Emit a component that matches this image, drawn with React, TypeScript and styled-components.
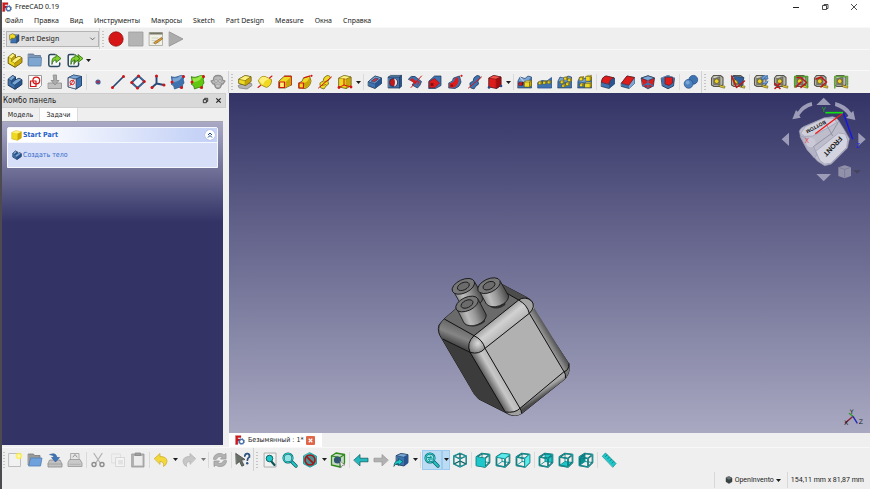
import React from "react";
import styled, { createGlobalStyle, css } from "styled-components";

const UI = `"Noto Sans", "Open Sans", sans-serif`;
const STATUS = `Roboto, "Noto Sans", sans-serif`;
const PANEL = `"DejaVu Sans Condensed", "DejaVu Sans", "Noto Sans", sans-serif`;

const GlobalStyle = createGlobalStyle`
  *, *::before, *::after { box-sizing: border-box; }
  body { margin: 0; background: #efefef; color: #1b1b1b; font: 7px/12px ${UI}; }
  button, select { font: inherit; color: inherit; margin: 0; padding: 0; border: 0; background: none; }
  svg { display: block; flex: none; }
`;

/* ---------- drawing helpers ---------- */

type Palette = [light: string, mid: string, dark: string, line: string];
const YEL: Palette = ["#fdf07a", "#efd922", "#c8a60a", "#61540c"];
const BLU: Palette = ["#7aa6d6", "#3f73b0", "#28548f", "#1a3252"];
const RED: Palette = ["#f4544c", "#dd1c1c", "#a80c0c", "#4a1216"];
const TEA: Palette = ["#5fe9ea", "#1fc6ca", "#0a9092", "#0b5557"];

type PathProps = { d: string; f?: string; s?: string; w?: number };
const P = ({ d, f = "none", s = "none", w = 0.8 }: PathProps) => (
  <path d={d} fill={f} stroke={s} strokeWidth={w} strokeLinejoin="round" strokeLinecap="round" />
);
const Dot = ({ x, y, r = 1.5, f = "#d41414" }: { x: number; y: number; r?: number; f?: string }) => (
  <circle cx={x} cy={y} r={r} fill={f} />
);

type BoxProps = { c: Palette; x?: number; y?: number; w?: number; h?: number; d?: number; face?: string; line?: number };
const Box = ({ c, x = 1.5, y = 4.5, w = 9, h = 9.5, d = 3.5, face, line = 0.7 }: BoxProps) => (
  <>
    <P d={`M${x} ${y}l${d} ${-d * 0.8}h${w}l${-d} ${d * 0.8}z`} f={c[0]} s={c[3]} w={line} />
    <P d={`M${x + w} ${y}l${d} ${-d * 0.8}v${h}l${-d} ${d * 0.8}z`} f={c[2]} s={c[3]} w={line} />
    <P d={`M${x} ${y}h${w}v${h}h${-w}z`} f={face ?? c[1]} s={c[3]} w={line} />
  </>
);

const Body = ({ c }: { c: Palette }) => (
  <>
    <P d="M1.500 5L5.500 1.500 8.500 3V6L12 4.200 14.800 5.800V10.500L8 15.200 1.500 11.500z" f={c[1]} s={c[3]} w={1} />
    <P d="M1.500 5L5.500 1.500 8.500 3 4.800 6.500z" f={c[0]} s={c[3]} w={0.4} />
    <P d="M4.800 6.500L8.500 3V6L4.800 9z" f={c[2]} s={c[3]} w={0.4} />
    <P d="M4.800 9L8.500 6 12 4.200 14.800 5.800 8 11z" f={c[0]} s={c[3]} w={0.4} />
    <P d="M8 11L14.800 5.800V10.500L8 15.200z" f={c[2]} s={c[3]} w={0.4} />
  </>
);

type View = "iso" | "front" | "top" | "right" | "rear" | "bottom" | "left";
const VIEW_FACE: Record<string, string> = {
  front: "M1.500 5l8.500 1.500v8.500L1.500 13.500z",
  top: "M1.500 5L7 1.500l7.500 1L10 6.500z",
  right: "M10 6.500l4.500-4V10.500L10 15z",
  rear: "M7 1.500l7.500 1v8L7 9.500z",
  bottom: "M1.500 13.500L7 9.500l7.500 1L10 15z",
  left: "M1.500 5L7 1.500v8l-5.500 4z",
};
const Frame = ({ face }: { face: View }) => {
  if (face === "iso")
    return (
      <>
        <P d="M8 1.300l6.200 2.700v8L8 14.800 1.800 12V4zM1.800 4L8 6.800 14.200 4M8 6.800v8M1.800 12L8 9l6.200 3M8 1.300v5" s={TEA[3]} w={1.3} />
        <P d="M8 1.300l6.200 2.700v8L8 14.800 1.800 12V4zM1.800 4L8 6.800 14.200 4M8 6.800v8" s={TEA[1]} w={0.6} />
      </>
    );
  const outline = "M1.500 5L7 1.500l7.500 1v8L10 15l-8.500-1.500zM1.500 5l8.500 1.500 4.500-4M10 6.500V15";
  const hidden = face === "rear" || face === "bottom" || face === "left";
  return (
    <>
      {hidden && <P d={VIEW_FACE[face]} f={face === "left" ? TEA[2] : TEA[1]} />}
      <P d="M7 1.500v8l7.500 1M7 9.500l-5.500 4" s={TEA[2]} w={0.9} />
      <P d={outline} s={TEA[3]} w={1.6} />
      {!hidden && <P d={VIEW_FACE[face]} f={face === "front" ? TEA[1] : TEA[0]} />}
      <P d={outline} s={TEA[1]} w={0.6} />
    </>
  );
};

const Tape = () => (
  <>
    <P d="M1.500 4l2-2.500h7l2.500 2v7l-2 2H4L1.500 11z" f="#b9b9ac" s="#55554d" w={1.1} />
    <P d="M3.500 4L10 2.800v8H4z" f="#7d7d74" s="#5c5c55" w={0.6} />
    <circle cx="6.700" cy="7.200" r="2.300" fill="#ecd02a" stroke="#554c0c" strokeWidth=".6" />
    <P d="M4 3.500l3-.700" s="#e8e8e0" w={0.9} />
    <P d="M9 11l6 1.200-.500 2L10 13z" f="#e3c93a" s="#655a10" w={0.6} />
  </>
);

const Lens = () => (
  <>
    <P d="M9 9l5 5" s={TEA[3]} w={3.2} />
    <P d="M9 9l5 5" s={TEA[1]} w={1.9} />
    <circle cx="6" cy="6" r="4.500" fill="#93e3e4" stroke={TEA[3]} strokeWidth="2" />
    <circle cx="6" cy="6" r="4.500" fill="none" stroke={TEA[1]} strokeWidth="1.200" />
  </>
);

const Terrain = () => (
  <>
    <P d="M1 7l2-4 5 1.500 3-2.500 3.500 1V14H1z" f={BLU[1]} s={BLU[3]} w={0.6} />
    <P d="M1.500 7l2-3.500 4.500 1.500 3-2.500 3 1-3 3.500-5 1z" f={BLU[0]} />
  </>
);

const ExportArrow = ({ x = 0 }: { x?: number }) => (
  <g transform={`translate(${x} 0)`}>
    <P d="M5 12c-.500-5 1-7 4-7V2.500L14 6.500l-5 4V8C7 8 5.800 9 5 12z" f="#7fd02f" s="#2c6612" w={0.8} />
  </g>
);

const ICONS: Record<string, React.ReactNode> = {
  app: (
    <>
      <P d="M1 1h8.500v3H4.500v2.500H8v3H4.500V15H1z" f="#d8151b" s="#7c0a0e" w={0.5} />
      <circle cx="10.500" cy="10.500" r="3.400" fill="none" stroke="#4a72ad" strokeWidth="2" />
      <circle cx="10.500" cy="10.500" r="4.800" fill="none" stroke="#35598e" strokeWidth="1.200" strokeDasharray="1.900 1.870" />
    </>
  ),
  workbench: (
    <>
      <Box c={BLU} x={3} y={5.5} w={8} h={9} />
      <P d="M1 3l4.500-2L10 4 8 8 4 7.500 1.500 10z" f={YEL[1]} s={YEL[3]} />
    </>
  ),
  record: <circle cx="8" cy="8" r="7.200" fill="#d61616" stroke="#8b0a0a" strokeWidth=".7" />,
  stop: <P d="M1 1h14v14H1z" f="#b4b4b4" s="#9c9c9c" />,
  play: <P d="M1.500 1l13.500 7L1.500 15z" f="#acacac" s="#8e8e8e" />,
  macro: (
    <>
      <P d="M1.500 1.500h13v13h-13z" f="#f1f1e6" s="#a6a69b" />
      <P d="M1.500 1.500h13v2h-13z" f="#777768" />
      <P d="M4 7h6M4 9.500h4M4 12h7" s="#bcbcb0" w={0.6} />
      <P d="M6 11.500l7.500-5 1 1.500-7 4.800z" f="#e8a02a" s="#6b4a12" w={0.6} />
    </>
  ),
  newPart: <Body c={YEL} />,
  body: <Body c={BLU} />,
  group: (
    <>
      <P d="M1.500 2h5l1 1.500h6V13h-12z" f="#7e97b4" s="#5a728f" />
      <P d="M2 5.500h12.500L14 14H1.800z" f="#7fa6d0" s="#5a80aa" />
    </>
  ),
  link: (
    <>
      <P d="M8 2.500H3.500Q1.800 2.500 1.800 4.200v8.600q0 1.700 1.700 1.700h7.500q1.700 0 1.700-1.700V11" f="#f4f7fa" s="#2b475e" w={1.5} />
      <ExportArrow />
    </>
  ),
  linkGroup: (
    <>
      <P d="M7 2.500H3Q1.200 2.500 1.200 4.200v8.600q0 1.700 1.700 1.700h7q1.700 0 1.700-1.700V11" f="#f4f7fa" s="#2b475e" w={1.5} />
      <ExportArrow x={2} />
      <ExportArrow x={-1} />
    </>
  ),
  sketch: (
    <>
      <P d="M2 1.500h12.500v10l-3 3H2z" f="#fdfdfd" s="#858585" />
      <P d="M3.500 7h5.500v5.500H3.500z" s="#d41414" w={1.2} />
      <circle cx="9.300" cy="6.500" r="3.400" fill="none" stroke="#d41414" strokeWidth="1.200" />
    </>
  ),
  importTray: (
    <>
      <P d="M1.500 9h13v5.500h-13z" f="#c0c0c0" s="#8a8a8a" />
      <P d="M6.500 1h3v5.500H12l-4 4.500-4-4.500h2.500z" f="#ababab" s="#8a8a8a" />
    </>
  ),
  mapSketch: (
    <>
      <P d="M1.500 3.500L6.500 1l8 1.500v9L9 15l-7.500-2z" f={BLU[1]} s={BLU[3]} w={0.8} />
      <P d="M1.500 3.500L6.500 1l8 1.500L9 5z" f={BLU[0]} s={BLU[3]} w={0.4} />
      <P d="M9 5l5.500-2.500v9L9 15z" f={BLU[1]} s={BLU[3]} w={0.5} />
      <P d="M1.500 3.500L9 5v10l-7.500-2z" f="#e9e9ef" s={BLU[3]} w={0.5} />
      <circle cx="5.200" cy="8.500" r="2.200" fill="none" stroke="#d41414" strokeWidth=".9" />
      <P d="M3 11.500l4-6" s="#d41414" />
    </>
  ),
  point: <circle cx="8" cy="8" r="2" fill="#c8203a" stroke="#3465a4" strokeWidth="1.200" />,
  line: (
    <>
      <P d="M2.500 13.500L13.500 2.500" s="#274a78" w={1.7} />
      <Dot x={2.5} y={13.5} /><Dot x={13.5} y={2.5} />
    </>
  ),
  plane: (
    <>
      <P d="M8.500 2l6 5.500-7 6.500-6-5.500z" f="#eef3f9" s="#274a78" w={1.9} />
      <P d="M8.500 2l6 5.500-7 6.500-6-5.500z" s="#5d8dc4" w={0.6} />
      <Dot x={8.5} y={2} /><Dot x={14.2} y={7.5} /><Dot x={7.5} y={14} /><Dot x={1.8} y={8.5} />
    </>
  ),
  lcs: (
    <>
      <P d="M6.500 2v7.500L2 13.500M6.500 9.500l7.500 1.500" s="#274a78" w={1.9} />
      <Dot x={6.5} y={2} /><Dot x={2} y={13.5} /><Dot x={14} y={11} />
    </>
  ),
  binder: (
    <>
      <P d="M1.500 3q4 1 6.500-.500T14 2q-1.500 4 0 7-2 1-1.500 5-4-1.500-8 1Q4.500 11 1.500 10.500q1-4 0-7.500z" f={BLU[1]} s={BLU[2]} />
      <P d="M2.500 4q4 .800 6-1t4-1Q11 7 3 8.500z" f={BLU[0]} />
      <Dot x={13.5} y={2.5} /><Dot x={2} y={8} /><Dot x={11.5} y={13.5} />
    </>
  ),
  subBinder: (
    <>
      <P d="M1.500 3q4 1 6.500-.500T14 2q-1.500 4 0 7-2 1-1.500 5-4-1.500-8 1Q4.500 11 1.500 10.500q1-4 0-7.500z" f="#62c80f" s="#2f7a05" />
      <P d="M2.500 4q4 .800 6-1t4-1Q11 7 3 8.500z" f="#98e845" />
      <Dot x={13.5} y={2.5} /><Dot x={2} y={8} /><Dot x={11.5} y={13.5} />
    </>
  ),
  clone: (
    <>
      <P d="M3.500 6Q3 1.500 8 1.500T12.500 6l2.500 1-2 3h-1.500Q11 14.500 8 14.500T4.500 10H3L1 7z" f="#b9b9b9" s="#8d8d8d" w={1.3} />
      <circle cx="6" cy="7" r="1.300" fill="#eee" stroke="#777" strokeWidth=".6" />
      <circle cx="10" cy="7" r="1.300" fill="#eee" stroke="#777" strokeWidth=".6" />
      <P d="M6 11h4v2H6z" f="#dcdcdc" s="#888" w={0.5} />
    </>
  ),
  pad: (
    <>
      <P d="M1.500 11.500L6 9.500h8.500l.500 2-5 3.500-7.500-1z" f="#b5b5b5" s="#808080" />
      <P d="M2 5L8 1.500l6 1.200V7.500L8.500 11.500 2 9.500z" f={YEL[1]} s={YEL[3]} />
      <P d="M2 5L8 1.500l6 1.200L8.500 6.500z" f={YEL[0]} s={YEL[3]} w={0.5} />
      <P d="M8.500 6.500L14 2.700V7.500l-5.500 4z" f={YEL[2]} s={YEL[3]} w={0.4} />
    </>
  ),
  revolution: (
    <>
      <P d="M1.500 6.500Q4 1.500 8 2.500L14.500 5.500q.500 6-5 8L4 11z" f={YEL[1]} s="#9a8412" />
      <P d="M2 6.500Q4.500 2 8 3l4.500 2Q7 6 6 11z" f={YEL[0]} />
      <P d="M1 13.500l2.500-2M12.500 4L15 2" s="#d41414" w={1.1} />
    </>
  ),
  loft: (
    <>
      <P d="M2 7l5.500-5h6.700V11l-6 3H2z" f={YEL[1]} s={YEL[3]} />
      <P d="M7.500 2.200h6.700V11" s="#d41414" w={1.1} />
      <P d="M8.500 8L14 3v7.500l-5.500 3z" f={YEL[2]} />
      <P d="M2.500 8H7.500V13.500H2.500z" f={YEL[0]} s="#d41414" w={1.2} />
    </>
  ),
  pipe: (
    <>
      <P d="M2 9Q6 8 6.500 4l6-2 1.500 5q-1 6-6 7.500L2 14z" f={YEL[1]} s={YEL[3]} />
      <P d="M6.500 9q5-1 6-6.500l1.300 5q-1 5-6 6.500z" f={YEL[2]} />
      <P d="M2 9h4.500v5H2zM7 3.800L13 2" s="#d41414" w={1.2} />
      <Dot x={14.5} y={1.8} r={1.1} />
    </>
  ),
  helix: (
    <>
      <P d="M3 11q-1-3 3-3.500Q6 3 10 1.500q4 0 3 3-2 1-2 3 2 3-2 4.500l-2 3-3-1z" f={YEL[1]} s={YEL[3]} w={0.7} />
      <P d="M7 8l4-1.500M5 11.500l4-1" s={YEL[3]} w={0.6} />
      <P d="M1.500 14L14.500 3" s="#d41414" w={1} />
    </>
  ),
  addPrim: (
    <>
      <P d="M2 4L7 1.500l7 1.500v8.500L9 14.500 2 13z" f={YEL[1]} s={YEL[3]} />
      <P d="M2 4L7 1.500 14 3 9.500 5z" f={YEL[0]} s={YEL[3]} w={0.4} />
      <P d="M9.500 5L14 3v8.500l-4.500 3z" f={YEL[2]} s={YEL[3]} w={0.4} />
      <P d="M2 13.500l5-2.500 7 2M7 11V5" s="#d41414" w={1} />
      <Dot x={2} y={13.5} r={1.4} /><Dot x={14} y={13} r={1.4} />
    </>
  ),
  pocket: (
    <>
      <P d="M1.500 7.500L8 2l6.500 2V9.500L8 14.500l-6.500-2.500z" f={BLU[1]} s={BLU[3]} />
      <P d="M1.500 7.500L8 2l6.500 2L8 9.500z" f={BLU[0]} s={BLU[3]} w={0.5} />
      <P d="M4.500 7L8.500 4l3 .900-4 3z" f="#c63a48" s={BLU[3]} w={0.6} />
      <P d="M8 9.500L14.500 4v5.500l-6.500 5z" f={BLU[2]} />
    </>
  ),
  hole: (
    <>
      <Box c={BLU} x={1.5} y={3} w={11} h={11} d={2} />
      <circle cx="6.500" cy="8.500" r="4" fill="#c41818" stroke={BLU[3]} strokeWidth=".8" />
      <P d="M7 4.600a4 4 0 010 7.800q2-4 0-7.800z" f="#e3e8ee" />
    </>
  ),
  groove: (
    <>
      <P d="M1.500 5Q4 1 8 2.500l6.500 5q-1 4-4 6.500L5 11l2-2.500z" f={BLU[1]} s={BLU[3]} w={0.7} />
      <P d="M5 4l5 4-2 2-5-4zM10.500 6l2 2-2 4" f={RED[1]} />
      <P d="M4 13.500L14.500 2" s="#d41414" w={1} />
    </>
  ),
  subLoft: (
    <>
      <P d="M2 7l5.500-5h6.500V11.500l-5.500 3H2z" f={BLU[1]} s={BLU[3]} w={0.7} />
      <P d="M2.500 7.500L7.500 4.500 12.500 9l-4.500 4.500H2.500z" f={RED[1]} s="#8b0505" w={0.5} />
      <P d="M3.500 9h3v3h-3z" f="#8a1010" />
    </>
  ),
  subPipe: (
    <>
      <P d="M2 9Q6 8 6.500 4l6-2 1.500 6q-1 5-6 6.500L2 14z" f={BLU[1]} s={BLU[3]} w={0.7} />
      <P d="M2.500 9.500q5-1 6-5.500l2.500-.500q2 6.500-4 10H2.500z" f={RED[1]} />
      <P d="M3.500 10.500h2.500v2h-2.500z" f="#8a1010" />
      <Dot x={14.5} y={1.8} r={1.1} />
    </>
  ),
  subHelix: (
    <>
      <P d="M3 11q-1-3 3-3.500Q6 3 10 1.500q4 0 3 3-2 1-2 3 2 3-2 4.500l-2 3-3-1z" f={BLU[1]} s={BLU[3]} w={0.7} />
      <P d="M1.500 14L14.500 3" s="#d41414" w={1} />
    </>
  ),
  subPrim: (
    <>
      <P d="M2 4L6.500 1.500 14 3v8.500L9.500 14.500 2 13z" f={RED[1]} s={RED[3]} />
      <P d="M2 4L6.500 1.500 14 3 9.500 5z" f={RED[0]} s={RED[3]} w={0.4} />
      <P d="M9.500 5L14 3v8.500l-4.500 3z" f={RED[2]} s={RED[3]} w={0.4} />
      <Dot x={2} y={13.5} r={1.3} f="#204a87" /><Dot x={14} y={12} r={1.3} f="#204a87" />
    </>
  ),
  mirrored: (
    <>
      <Terrain />
      <P d="M2.500 2.500l6 7" s="#e8eef6" w={0.8} />
      <Box c={YEL} x={7.5} y={8} w={5} h={5} d={2} line={0.5} />
      <Box c={RED} x={2} y={9} w={3} h={2.5} d={1.2} line={0.4} />
    </>
  ),
  linear: (
    <>
      <P d="M1 8.500l4-2 5 .500 4.500-3.500V14H1z" f={BLU[1]} s={BLU[2]} />
      <Box c={YEL} x={1.5} y={8} w={2.4} h={2.4} d={1} line={0.4} />
      <Box c={YEL} x={6} y={7.6} w={2.4} h={2.4} d={1} line={0.4} />
      <Box c={YEL} x={10.5} y={7.2} w={2.4} h={2.4} d={1} line={0.4} />
    </>
  ),
  polar: (
    <>
      <Terrain />
      <Box c={YEL} x={7} y={3.5} w={2.6} h={2.5} d={1} line={0.4} />
      <Box c={YEL} x={11} y={5} w={2.6} h={2.5} d={1} line={0.4} />
      <Box c={YEL} x={3.5} y={7} w={2.6} h={2.5} d={1} line={0.4} />
      <Box c={YEL} x={9} y={9} w={2.6} h={2.5} d={1} line={0.4} />
      <Box c={YEL} x={5} y={11} w={2.6} h={2} d={1} line={0.4} />
    </>
  ),
  multi: (
    <>
      <Terrain />
      <Box c={YEL} x={2.5} y={3.5} w={3} h={3} d={1.2} line={0.4} />
      <Box c={YEL} x={9} y={2.5} w={4} h={4.5} d={1.4} line={0.4} />
      <Box c={YEL} x={3} y={10} w={2.5} h={2.5} d={1.2} line={0.4} />
      <Box c={YEL} x={8} y={9.5} w={5} h={4} d={1.5} line={0.4} />
    </>
  ),
  fillet: (
    <>
      <P d="M1.500 7Q2 3 6 2l8.500 2V10L9 14.500l-7.500-2z" f={BLU[1]} s={BLU[3]} w={0.7} />
      <P d="M9 14.500V10Q9.500 5.500 14.500 4v6z" f={BLU[2]} />
      <P d="M1.500 8Q2 3 6 2l8 1.800Q9.500 5 9 10z" f={RED[1]} s="#6b1010" w={0.6} />
    </>
  ),
  chamfer: (
    <>
      <P d="M1.500 9L7 2l7.500 1.500V9.500L9 14.500l-7.500-2z" f={BLU[1]} s={BLU[3]} w={0.7} />
      <P d="M9 14.500V11l5.500-7.500v6z" f={BLU[0]} />
      <P d="M1.500 9L7 2l7.500 1.500L9 11z" f={RED[1]} s="#6b1010" w={0.6} />
    </>
  ),
  draft: (
    <>
      <P d="M1.500 4L8 1.800 14.500 4l-1.200 8L8 14.800l-5.300-3z" f={RED[1]} s={BLU[3]} />
      <P d="M1.500 4L8 1.800 14.500 4 8 6.500z" f={BLU[0]} s={BLU[3]} w={0.6} />
      <P d="M8 6.500v8M2.800 12L8 9l5.200 3" s={BLU[1]} w={1.4} />
    </>
  ),
  thickness: (
    <>
      <P d="M1.500 4L8 1.500 14.500 4l-1 8L8 14.800 2.500 12z" f={BLU[1]} s={BLU[3]} />
      <P d="M1.500 4L8 1.500 14.500 4" s={BLU[0]} />
      <P d="M5 3.500v6.500l4 1.500L12.500 9V3.800z" f={RED[1]} s="#6b1010" w={0.6} />
    </>
  ),
  boolean: (
    <>
      <circle cx="10.300" cy="5.800" r="4.400" fill={BLU[1]} stroke={BLU[2]} strokeWidth=".8" />
      <circle cx="5.600" cy="9.800" r="4.400" fill="#4f83c0" stroke={BLU[2]} strokeWidth=".8" />
      <circle cx="4.600" cy="8.500" r="2" fill={BLU[0]} />
    </>
  ),
  measure: <Tape />,
  measureAngle: (
    <>
      <Tape />
      <P d="M3 2l11 1.500-2.500 9z" f="#2f5f9f" s={BLU[3]} w={0.6} />
      <P d="M1.500 2l5 11.500L14.500 7" s="#c01818" w={1.5} />
    </>
  ),
  measureRefresh: (
    <>
      <Tape />
      <P d="M8.500 5q0-3.500 3-3.500L14 2.500V1l1 4h-4l1.500-1.200q-2-.500-2 1.700zM15 7q0 3-3 3L9 9" f="#729fcf" s="#3a6aa4" w={0.8} />
    </>
  ),
  measureClear: (<><Tape /><P d="M2 9.500l5 5M7 9.500l-5 5" s="#c01818" w={1.6} /></>),
  measureToggleAll: (
    <>
      <Tape />
      <P d="M1.800 13V2.500h12.700V13" s="#4da02a" w={1.7} />
      <P d="M4 3.500h4l5.500 5L8 13.500M3 13l5-5" s="#c01818" w={1.6} />
    </>
  ),
  measureToggle3d: (<><Tape /><P d="M3 5l5-2 5.500 5L8 13" s="#c01818" w={1.6} /></>),
  measureToggleDelta: (<><Tape /><P d="M1.800 14V2.500h12.700V11" s="#63a83a" w={1.5} /></>),
  fileNew: (
    <>
      <P d="M2 1.500h11.500v13H2z" f="#f1f1f1" s="#b0b0b0" />
      <circle cx="12" cy="4" r="3.300" fill="#ffee3c" opacity=".75" />
      <circle cx="12" cy="4" r="1.800" fill="#fff8a8" />
    </>
  ),
  fileOpen: (
    <>
      <P d="M1.500 2h5l1 1.500H13V13H1.500z" f="#9a9a9a" s="#777" />
      <P d="M4 6h11L13.500 14H2z" f="#6fa2dc" s="#4f7fb8" />
    </>
  ),
  fileSave: (
    <>
      <P d="M3 8h10l2 4v3H1v-3z" f="#c2c2c2" s="#8c8c8c" />
      <P d="M1 12h14" s="#9a9a9a" />
      <P d="M3 2.500Q9 0 10 5.500h2.500L8.500 10 4.500 5.500H7Q6.500 3 3 2.500z" f="#3c76b8" s="#2d5a92" w={0.6} />
    </>
  ),
  print: (
    <>
      <P d="M4 1.500h8v7H4z" f="#e6e6e6" s="#9a9a9a" />
      <P d="M6 5l2-2.500L10 5" s="#888" w={0.9} />
      <P d="M3 7.500h10l2 3.500v3.500H1V11z" f="#c9c9c9" s="#959595" />
      <P d="M3 12.300h10" s="#a4a4a4" w={0.7} />
    </>
  ),
  cut: (
    <>
      <P d="M4 1.500l6.500 10M12 1.500l-6.500 10" s="#b2b2b2" w={1.3} />
      <circle cx="4" cy="12.500" r="2" fill="none" stroke="#8d8d8d" strokeWidth="1.400" />
      <circle cx="12" cy="12.500" r="2" fill="none" stroke="#8d8d8d" strokeWidth="1.400" />
    </>
  ),
  copy: (
    <>
      <P d="M2 2h8.500v9H2z" f="#efefef" s="#dcdcdc" />
      <P d="M6 5.500h8.500v9H6z" f="#f4f4f4" s="#cfcfcf" />
      <P d="M8 8h5v4.500H8z" f="#e2e2e2" />
    </>
  ),
  paste: (
    <>
      <P d="M2 2h12v13H2z" f="#b2b2b2" s="#979797" />
      <P d="M4 4h8.500v9.500H4z" f="#ececec" />
      <P d="M5.500 1h5v2.500h-5z" f="#a0a0a0" s="#868686" />
    </>
  ),
  undo: <P d="M1.500 6.500L7 1.500v3q7 0 7 5-.500 3.500-3.500 5 1-5-3.500-5v2.500z" f="#f2d83a" s="#cdae30" />,
  redo: <P d="M14.500 6.500L9 1.500v3q-7 0-7 5 .500 3.500 3.500 5-1-5 3.500-5v2.500z" f="#c6c6c6" s="#b4b4b4" />,
  refresh: (
    <>
      <P d="M1.500 7Q2 1.500 8 1.500q2.500 0 4 1.500l2-1.500V7H8.500l2-2Q6 3.500 4.500 7z" f="#b3b3b3" s="#989898" />
      <P d="M14.500 9Q14 14.500 8 14.500q-2.500 0-4-1.500l-2 1.500V9h5.500l-2 2q4.500 1.500 6-2z" f="#b3b3b3" s="#989898" />
    </>
  ),
  whatsThis: (
    <>
      <P d="M1 1.500l9 6-3.500.700 2.500 5-2.200 1L4.500 9.500 1.500 12z" f="#686e68" s="#474d47" />
      <P d="M9.800 4q.500-2.700 2.800-2.300t1.800 3.300q-2 1-2 3.200" s="#2f5580" w={1.8} />
      <Dot x={12.2} y={11.3} r={1.2} f="#2f5580" />
    </>
  ),
  fitAll: (
    <>
      <P d="M2.500 1h11.500v14H2.500z" f="#f1f1f1" s="#9f9f9f" />
      <P d="M9 9l3.500 4" s={TEA[3]} w={2.2} />
      <circle cx="7.500" cy="6.500" r="3.300" fill={TEA[1]} stroke={TEA[3]} strokeWidth=".9" />
    </>
  ),
  fitSelection: <Lens />,
  drawStyle: (
    <>
      <P d="M8 .800l6.500 3.400v7.600L8 15.200l-6.500-3.400V4.200z" f={TEA[1]} s={TEA[2]} />
      <circle cx="8" cy="8" r="5" fill="#4d9092" stroke="#a51818" strokeWidth="1.700" />
      <P d="M4.800 4.800l6.400 6.400" s="#a51818" w={1.7} />
    </>
  ),
  boxSelect: (
    <>
      <P d="M1.500 4L6 1l8.500 1.500V11L10 15l-8.500-2z" f="#c5dcc0" s="#2f8a1c" w={1.3} />
      <P d="M1.500 4L10 5.500 14.500 2.500M10 5.500V15" s="#2f8a1c" w={1.2} />
      <circle cx="7.500" cy="8" r="3.600" fill="#2f5573" />
      <P d="M10 9l5 4-2.500.300L11 15.500z" f="#eee" s="#666" w={0.6} />
    </>
  ),
  back: <P d="M1 8l6-5.500v3.700h8v3.600H7v3.700z" f="#22b8bd" s={TEA[3]} w={0.7} />,
  forward: <P d="M15 8L9 2.500v3.700H1v3.600h8v3.700z" f="#b1b1b1" s="#999" />,
  linkGo: (
    <>
      <P d="M3.500 3.500L8 1.500l7 1.200v8L11 14l-7.500-1.500z" f={BLU[1]} s={BLU[3]} />
      <P d="M3.500 3.500L8 1.500l7 1.200L11 5z" f={BLU[0]} s={BLU[3]} w={0.4} />
      <P d="M11 5l4-2.300v8L11 14z" f={BLU[2]} />
      <P d="M1 14q0-5 4.500-5.500V6.500L10 9.500l-4.500 4V11.500q-3 0-4.500 2.500z" f={TEA[1]} s={TEA[3]} w={0.7} />
    </>
  ),
  zoomSync: (<><Lens /><P d="M3.500 5.500h4L6.500 4M8.500 7h-4l1 1.500" s={TEA[2]} w={1} /></>),
  iso: <Frame face="iso" />,
  front: <Frame face="front" />,
  top: <Frame face="top" />,
  right: <Frame face="right" />,
  rear: <Frame face="rear" />,
  bottom: <Frame face="bottom" />,
  left: <Frame face="left" />,
  ruler: (
    <>
      <P d="M1.500 4l3-3L15 11.500 12 15z" f={TEA[1]} s={TEA[2]} />
      <P d="M6 3L4.500 4.500M8.200 5.200L6.700 6.700M10.400 7.400L8.900 8.900M12.600 9.600L11.100 11.100" s={TEA[3]} w={0.6} />
    </>
  ),
  yellowBox: (
    <>
      <P d="M1.500 3.500L7 1l8 1.500v9L9.500 15l-8-2z" f={YEL[1]} s={YEL[2]} />
      <P d="M9.500 5L15 2.500v9L9.500 15z" f={YEL[2]} />
      <P d="M1.500 3.500L7 1l8 1.500L9.500 5z" f={YEL[0]} />
    </>
  ),
  openInventor: (
    <>
      <P d="M8 1l6 3v7.500L8 15l-6-3.500V4z" f="#3d4444" s="#222828" />
      <P d="M8 1l6 3-6 3.500L2 4z" f="#6a7474" />
    </>
  ),
};

const Icon = ({ name, size = 16 }: { name: string; size?: number }) => (
  <svg width={size} height={size} viewBox="0 0 16 16" aria-hidden="true">{ICONS[name]}</svg>
);

/* ---------- window chrome ---------- */

const Window = styled.div`
  min-height: 100vh;
  display: flex;
  flex-direction: column;
  border-left: 2px solid #4c4c50;
  background: #efefef;
`;

const TitleBar = styled.header`
  display: flex;
  align-items: center;
  height: 14px;
  padding-right: 2px;
  background: #fff;
`;
const Title = styled.span`
  flex: 1;
  padding-left: 3px;
`;
const WindowButton = styled.button`
  width: 29px;
  height: 14px;
  display: grid;
  place-items: center;
`;

const MenuBar = styled.nav`
  display: flex;
  align-items: center;
  height: 13px;
  padding-left: 3px;
  gap: 11px;
  background: #fff;
`;
const MenuItem = styled.button`white-space: nowrap;`;

const ToolRow = styled.div<{ $height?: number }>`
  display: flex;
  align-items: center;
  height: ${(p) => p.$height ?? 22}px;
  border-top: 1px solid #f8f8f8;
  overflow: hidden;
`;
const Grip = styled.div<{ $first?: boolean }>`
  flex: none;
  align-self: stretch;
  width: ${(p) => (p.$first ? 3 : 7)}px;
  display: flex;
  align-items: center;
  justify-content: flex-end;
  ${(p) => !p.$first && css`border-left: 1px solid #d2d2d2;`}
  &::after {
    content: "";
    width: 2px;
    height: 16px;
    margin-right: ${(p) => (p.$first ? 0 : 2)}px;
    background: repeating-linear-gradient(#c4c4c4 0 1px, transparent 1px 3px);
  }
`;
const ToolButton = styled.button<{ $checked?: boolean }>`
  flex: none;
  width: 20px;
  height: 20px;
  display: grid;
  place-items: center;
  ${(p) => p.$checked && css`background: #bcdcf4; box-shadow: inset 0 0 0 1px #9ccbef;`}
`;
const DropButton = styled(ToolButton)<{ $wide?: boolean }>`
  width: ${(p) => (p.$wide ? 8 : 7)}px;
`;
const Separator = styled.span`
  flex: none;
  width: 1px;
  height: 16px;
  margin: 0 1px;
  background: #dadada;
`;
const Combo = styled.label`
  display: flex;
  align-items: center;
  gap: 1px;
  width: 93px;
  height: 16px;
  margin-left: 1px;
  padding: 0 2px;
  border: 1px solid #b4b4b4;
  background: #e1e1e1;
`;
const ComboSelect = styled.select`
  flex: 1;
  min-width: 0;
  height: 14px;
  appearance: none;
  outline: none;
`;

/* ---------- work area ---------- */

const WorkArea = styled.main`
  flex: 1;
  display: grid;
  grid-template-columns: 224px minmax(0, 1fr);
  column-gap: 3px;
`;
const Dock = styled.aside`
  display: flex;
  flex-direction: column;
  padding-bottom: 2px;
`;
const DockHeader = styled.div`
  display: flex;
  align-items: center;
  height: 15px;
  padding-left: 1px;
  border: 1px solid #cdcdcd;
  border-left: 0;
  background: #d9d9d9;
  font: 8px/12px ${PANEL};
`;
const DockTitle = styled.h2`
  flex: 1;
  margin: 0;
  font: inherit;
`;
const DockButton = styled.button`
  width: 13px;
  height: 13px;
  display: grid;
  place-items: center;
`;
const TabStrip = styled.div`
  display: flex;
  height: 13px;
  font: 7px/12px ${PANEL};
`;
const DockTab = styled.button<{ $active?: boolean }>`
  width: 38px;
  border-right: 1px solid #dcdcdc;
  padding-top: 1px;
  background: ${(p) => (p.$active ? "#fff" : "#f0f0f0")};
`;
const TaskPane = styled.section`
  flex: 1;
  margin-right: 3px;
  padding: 5px;
  border-top: 1px solid #a5a5b0;
  background: linear-gradient(#a9a9c6 0, #333366 100px);
`;
const TaskBox = styled.div`
  border: 1px solid #f5f7ff;
  border-radius: 2px 2px 0 0;
  background: #d6dff7;
  color: #2a62c8;
`;
const TaskHeader = styled.div`
  display: flex;
  align-items: center;
  gap: 1px;
  height: 15px;
  padding: 0 2px 0 3px;
  border-bottom: 1px solid #f5f7ff;
  background: linear-gradient(90deg, #ffffff 10%, #c6d3f7 90%);
  font: bold 7px/12px ${PANEL};
`;
const TaskTitle = styled.h3`
  flex: 1;
  margin: 0;
  font: inherit;
`;
const CollapseButton = styled.button`
  width: 10px;
  height: 10px;
  display: grid;
  place-items: center;
  border-radius: 50%;
  background: #fff;
  box-shadow: 0 0 1px #7388c0;
`;
const TaskBody = styled.div`padding: 6px 4px;`;
const TaskLink = styled.a`
  display: flex;
  align-items: center;
  gap: 1px;
  color: #3468cc;
  text-decoration: none;
  font: 7px/12px ${PANEL};
`;

const ViewColumn = styled.div`
  display: flex;
  flex-direction: column;
  min-width: 0;
`;
const Viewport = styled.section`
  position: relative;
  flex: 1;
  min-height: 200px;
  overflow: hidden;
  background: linear-gradient(#333366, #a9a9c2);
`;
const ModelLayer = styled.div`
  position: absolute;
  left: calc(50% - 130px);
  bottom: 8px;
`;
const CubeLayer = styled.div`
  position: absolute;
  top: 0;
  right: 0;
`;
const AxisLayer = styled.div`
  position: absolute;
  right: 0;
  bottom: 0;
`;
const DocTabs = styled.div`
  display: flex;
  height: 14px;
`;
const DocTab = styled.div`
  display: flex;
  align-items: center;
  gap: 2px;
  padding: 0 7px 0 6px;
  background: #fff;
  font: 7px/12px ${PANEL};
`;
const DocTabLabel = styled.button`
  display: flex;
  align-items: center;
  gap: 3px;
`;
const CloseTab = styled.button`
  width: 9px;
  height: 9px;
  display: grid;
  place-items: center;
  border-radius: 1px;
  background: #e0684a;
`;

const StatusBar = styled.footer`
  display: flex;
  align-items: center;
  justify-content: flex-end;
  height: 18px;
`;
const StatusItem = styled.div`
  display: flex;
  align-items: center;
  padding: 0 6px 0 3px;
  border-left: 1px solid #d8d8d8;
  white-space: nowrap;
  font: 7px/16px ${STATUS};
`;
const NavButton = styled.button`
  display: flex;
  align-items: center;
  gap: 2px;
  padding-left: 7px;
`;

/* ---------- drawings ---------- */

const Caret = ({ muted }: { muted?: boolean }) => (
  <svg width="5" height="3" viewBox="0 0 5 3" aria-hidden="true">
    <path d="M0 0h5L2.500 3z" fill={muted ? "#777" : "#1c1c1c"} />
  </svg>
);

const Peg = ({ x, y, dx, dy }: { x: number; y: number; dx: number; dy: number }) => (
  <g stroke="#151515" strokeWidth="2.500" transform={`translate(${x} ${y})`}>
    <path d={`M-33 9L${-33 + dx} ${9 + dy}q14 14 40 5q26-10 27-29L34 -13z`} fill="url(#peg)" />
    <ellipse rx="36" ry="20" transform="rotate(-25)" fill="#777" />
    <ellipse rx="19" ry="11" transform="rotate(-25)" fill="#6b6b6b" />
  </g>
);

const Model = () => (
  <svg width="170" height="160" viewBox="0 0 510 480" role="img" aria-label="Part">
    <defs>
      <linearGradient id="peg" gradientUnits="userSpaceOnUse" x1="-30" y1="35" x2="48" y2="5">
        <stop offset="0" stopColor="#707070" /><stop offset=".35" stopColor="#bcbcbc" /><stop offset=".6" stopColor="#9a9a9a" /><stop offset="1" stopColor="#484848" />
      </linearGradient>
      <linearGradient id="rim" gradientUnits="userSpaceOnUse" x1="222" y1="150" x2="262" y2="200">
        <stop offset="0" stopColor="#8c8c8c" /><stop offset=".5" stopColor="#d2d2d2" /><stop offset="1" stopColor="#b4b4b4" />
      </linearGradient>
      <linearGradient id="edge" gradientUnits="userSpaceOnUse" x1="202" y1="358" x2="250" y2="330">
        <stop offset="0" stopColor="#4c4c4c" /><stop offset=".55" stopColor="#c8c8c8" /><stop offset="1" stopColor="#b2b2b2" />
      </linearGradient>
      <linearGradient id="rimLeft" gradientUnits="userSpaceOnUse" x1="120" y1="185" x2="98" y2="238">
        <stop offset="0" stopColor="#6a6a6a" /><stop offset=".5" stopColor="#858585" /><stop offset="1" stopColor="#444" />
      </linearGradient>
      <linearGradient id="edgeRight" gradientUnits="userSpaceOnUse" x1="378" y1="235" x2="400" y2="222">
        <stop offset="0" stopColor="#a6a6a6" /><stop offset="1" stopColor="#545454" />
      </linearGradient>
      <linearGradient id="base" gradientUnits="userSpaceOnUse" x1="362" y1="377" x2="372" y2="393">
        <stop offset="0" stopColor="#a8a8a8" /><stop offset="1" stopColor="#4a4a4a" />
      </linearGradient>
      <radialGradient id="corner" cx=".55" cy=".45" r=".7">
        <stop offset="0" stopColor="#dcdcdc" /><stop offset="1" stopColor="#707070" />
      </radialGradient>
    </defs>
    <g strokeLinejoin="round">
      <path d="M72 162L130 112 240 55 318 96Q345 108 343 140L446 295Q453 318 436 341L306 445Q282 460 255 442L176 402Q160 385 150 365L66 222Q50 200 57 180Z" fill="#5c5c5c" stroke="#222" strokeWidth="3" />
      <path d="M73 162L130 112 240 60 296 105 162 212z" fill="#6a6a6a" />
      <path d="M242 56L318 96 296 105 252 80z" fill="#4c4c4c" />
      <path d="M73 162L162 212Q143 235 152 262L70 224Q46 190 73 162z" fill="url(#rimLeft)" />
      <path d="M68 222L152 262 255 441 176 402Q160 390 150 365z" fill="#3c3c3c" />
      <path d="M162 212L296 105Q322 120 328 145L195 250Q188 224 162 212z" fill="url(#rim)" />
      <path d="M296 105Q315 92 335 108 348 125 343 132L328 145Q320 120 296 105z" fill="#a4a4a4" />
      <path d="M150 262L195 250 300 430Q285 443 258 441z" fill="url(#edge)" />
      <path d="M162 212Q188 224 195 250 178 268 152 262 138 235 162 212z" fill="url(#corner)" />
      <path d="M195 250L328 145 432 320 300 430z" fill="#b1b1b1" />
      <path d="M328 145L343 130 446 295Q450 310 432 320z" fill="url(#edgeRight)" />
      <path d="M300 430L432 320Q440 328 436 341L306 445z" fill="url(#base)" />
      <path d="M432 320Q447 316 447 297 453 318 436 341z" fill="#777" />
      <path d="M258 441Q285 443 300 430L306 445Q282 460 258 441z" fill="#a0a0a0" />
      <path
        d="M73 162L162 212M252 80L296 105M162 212L296 105Q322 120 328 145L195 250Q188 224 162 212Q138 235 150 262M68 222L150 262Q178 270 195 250M150 262L255 440M195 250L300 430 432 320 328 145M296 105Q315 92 335 108 348 125 328 145M255 441Q285 445 300 430 304 436 305 446M447 295Q447 317 432 320 440 328 436 340"
        fill="none"
        stroke="#121212"
        strokeWidth="3"
      />
      <path d="M212 126q20 12 44-6v-10h-40zM135 178q30 16 60-8v-12h-50z" fill="#303030" />
    </g>
    <Peg x={130} y={64} dx={26} dy={46} />
    <Peg x={207} y={62} dx={25} dy={46} />
    <Peg x={141} y={117} dx={24} dy={48} />
  </svg>
);

const NavCube = () => (
  <svg width="100" height="97" viewBox="0 9 300 291" role="img" aria-label="Navigation cube">
    <g fill="#9c9cb8">
      <path d="M139 45L161 23 183 45zM139 252h44L161 274zM57 128v40L35 148zM265 128v40L287 148z" />
      <path d="M125 36Q96 44 83 65L78 60 67 88 92 83 88 76Q101 55 127 47zM196 36Q228 44 244 68L250 62 256 90 228 84 235 77Q222 57 195 48z" />
    </g>
    <g strokeLinejoin="round" stroke="#9a9ab4" strokeWidth="2">
      <path d="M88 124Q90 115 103 109L162 84 188 80Q201 82 207 94L221 116 238 146 232 174 184 222 164 227 143 214 112 180 92 142z" fill="#bdbdcb" />
      <path d="M92 130L106 110 163 84 192 85 200 97 180 110 128 138 103 139z" fill="#cfcfdb" />
      <path d="M137 184L206 129 226 132 233 150 230 172 182 220 164 222 150 212z" fill="#d4d4e0" />
      <path d="M90 138l15 4 22 18 14 34-8 10-22-26z" fill="#b4b4c6" />
      <circle cx="123" cy="158" r="14" fill="#c9c9d7" stroke="none" />
      <path d="M130 170L185 130 206 94M165 96L188 138" fill="none" stroke="#7d7d94" />
    </g>
    <g fontFamily="Liberation Sans, sans-serif" fontWeight="bold" fill="#151515">
      <text transform="translate(164 91) rotate(152)" fontSize="15">BOTTOM</text>
      <text transform="translate(208 138) rotate(133)" fontSize="21">FRONT</text>
    </g>
    <g fill="none" strokeWidth="4">
      <path d="M220 68L136 131" stroke="#f01818" />
      <path d="M220 68H166" stroke="#11e011" strokeWidth="5" />
      <path d="M220 68L248 148" stroke="#1414f0" />
    </g>
    <g fontFamily="Liberation Sans, sans-serif" fontSize="19">
      <text x="104" y="160" fill="#f04040">X</text>
      <text x="155" y="67" fill="#11c011">Y</text>
      <text x="258" y="173" fill="#2020e0">Z</text>
    </g>
    <path d="M205 232L224 226 243 232V258L224 265 205 258z" fill="#9191aa" />
    <path d="M205 232L224 238 243 232M224 238V265" fill="none" stroke="#73738f" strokeWidth="2" />
    <path d="M250 240H273L261 251z" fill="#44445e" />
  </svg>
);

const AxisCross = () => (
  <svg width="30" height="27" viewBox="420 20 90 81" role="img" aria-label="Axes">
    <g fill="none" strokeWidth="4">
      <path d="M459 51L435 72" stroke="#8a1f2a" />
      <path d="M459 51L447 42" stroke="#2a9a2a" />
      <path d="M459 51L472 72" stroke="#2424b8" />
    </g>
    <g fontFamily="DejaVu Sans, sans-serif" fontSize="19" fill="#1c1c24">
      <text x="449" y="43">Y</text>
      <text x="432" y="76">X</text>
      <text x="476" y="75">Z</text>
    </g>
  </svg>
);

/* ---------- toolbars ---------- */

const TOOLS_DESIGN = [
  "first", "body", "sketch", "importTray", "mapSketch", "sep",
  "point", "line", "plane", "lcs", "binder", "subBinder", "clone", "grip",
  "pad", "revolution", "loft", "pipe", "helix", "addPrim", "drop", "sep",
  "pocket", "hole", "groove", "subLoft", "subPipe", "subHelix", "subPrim", "drop", "sep",
  "mirrored", "linear", "polar", "multi", "sep",
  "fillet", "chamfer", "draft", "thickness", "sep", "boolean", "grip",
  "measure", "measureAngle", "sep",
  "measureRefresh", "measureClear", "measureToggleAll", "measureToggle3d", "measureToggleDelta",
];
const TOOLS_STRUCTURE = ["first", "newPart", "group", "link", "linkGroup", "drop"];
const TOOLS_MACRO = ["grip", "record", "stop", "macro", "play"];
const TOOLS_BOTTOM = [
  "first", "fileNew", "fileOpen", "fileSave", "print", "sep", "cut", "copy", "paste", "sep",
  "undo", "drop", "redo", "dropMuted", "sep", "refresh", "sep", "whatsThis", "grip",
  "fitAll", "fitSelection", "drawStyle", "drop", "boxSelect", "sep",
  "back", "forward", "linkGo", "drop", "sep", "zoomSync*", "drop*", "iso", "sep",
  "front", "top", "right", "sep", "rear", "bottom", "left", "sep", "ruler",
];

const Tools = ({ items, wide }: { items: string[]; wide?: boolean }) => (
  <>
    {items.map((raw, i) => {
      const checked = raw.endsWith("*");
      const item = raw.replace("*", "");
      if (item === "first") return <Grip key={i} $first />;
      if (item === "grip") return <Grip key={i} />;
      if (item === "sep") return <Separator key={i} />;
      if (item.startsWith("drop"))
        return (
          <DropButton key={i} $checked={checked} $wide={wide} aria-label="More">
            <Caret muted={item === "dropMuted"} />
          </DropButton>
        );
      return <ToolButton key={i} $checked={checked} aria-label={item}><Icon name={item} /></ToolButton>;
    })}
  </>
);

const MENUS = ["Файл", "Правка", "Вид", "Инструменты", "Макросы", "Sketch", "Part Design", "Measure", "Окна", "Справка"];

const Glyph = ({ d, size = 8, color = "#222", w = 1 }: { d: string; size?: number; color?: string; w?: number }) => (
  <svg width={size} height={size} viewBox="0 0 8 8" aria-hidden="true">
    <path d={d} fill="none" stroke={color} strokeWidth={w} />
  </svg>
);

export default function App() {
  return (
    <Window>
      <GlobalStyle />
      <TitleBar>
        <Icon name="app" size={10} />
        <Title>FreeCAD 0.19</Title>
        <WindowButton aria-label="Minimize"><Glyph d="M1 4.500h6" /></WindowButton>
        <WindowButton aria-label="Restore"><Glyph d="M1.500 2.500h4v4h-4zM3 2.500v-1h4v4H5.500" w={0.8} /></WindowButton>
        <WindowButton aria-label="Close"><Glyph d="M1 1l6 6M7 1L1 7" w={0.8} /></WindowButton>
      </TitleBar>
      <MenuBar>
        {MENUS.map((m) => <MenuItem key={m}>{m}</MenuItem>)}
      </MenuBar>
      <ToolRow>
        <Grip $first />
        <Combo>
          <Icon name="workbench" size={11} />
          <ComboSelect aria-label="Workbench" defaultValue="Part Design">
            <option>Part Design</option>
          </ComboSelect>
          <Glyph d="M1.500 3L4 5.500 6.500 3" size={7} color="#555" />
        </Combo>
        <Tools items={TOOLS_MACRO} />
      </ToolRow>
      <ToolRow $height={21}><Tools items={TOOLS_STRUCTURE} /></ToolRow>
      <ToolRow $height={23}><Tools items={TOOLS_DESIGN} /></ToolRow>

      <WorkArea>
        <Dock>
          <DockHeader>
            <DockTitle>Комбо панель</DockTitle>
            <DockButton aria-label="Float"><Glyph d="M1.500 3h3.500v3.500H1.500zM3 3V1.500h3.500V5H5" size={7} /></DockButton>
            <DockButton aria-label="Close panel"><Glyph d="M1.500 1.500l5 5M6.500 1.500l-5 5" size={7} w={1.4} /></DockButton>
          </DockHeader>
          <TabStrip role="tablist">
            <DockTab role="tab" aria-selected="false">Модель</DockTab>
            <DockTab role="tab" aria-selected="true" $active>Задачи</DockTab>
          </TabStrip>
          <TaskPane>
            <TaskBox>
              <TaskHeader>
                <Icon name="yellowBox" size={11} />
                <TaskTitle>Start Part</TaskTitle>
                <CollapseButton aria-label="Collapse"><Glyph d="M2 4L4 2l2 2M2 6.500l2-2 2 2" color="#1c4496" /></CollapseButton>
              </TaskHeader>
              <TaskBody>
                <TaskLink href="#body"><Icon name="body" size={10} />Создать тело</TaskLink>
              </TaskBody>
            </TaskBox>
          </TaskPane>
        </Dock>
        <ViewColumn>
          <Viewport>
            <ModelLayer><Model /></ModelLayer>
            <CubeLayer><NavCube /></CubeLayer>
            <AxisLayer><AxisCross /></AxisLayer>
          </Viewport>
          <DocTabs>
            <DocTab>
              <DocTabLabel><Icon name="app" size={10} />Безымянный : 1*</DocTabLabel>
              <CloseTab aria-label="Close document"><Glyph d="M2 2l4 4M6 2L2 6" size={7} color="#fff" w={1.3} /></CloseTab>
            </DocTab>
          </DocTabs>
        </ViewColumn>
      </WorkArea>

      <ToolRow $height={24}><Tools items={TOOLS_BOTTOM} wide /></ToolRow>
      <StatusBar>
        <StatusItem>
          <NavButton><Icon name="openInventor" size={8} />OpenInvento<Caret /></NavButton>
        </StatusItem>
        <StatusItem>154,11 mm x 81,87 mm</StatusItem>
      </StatusBar>
    </Window>
  );
}
